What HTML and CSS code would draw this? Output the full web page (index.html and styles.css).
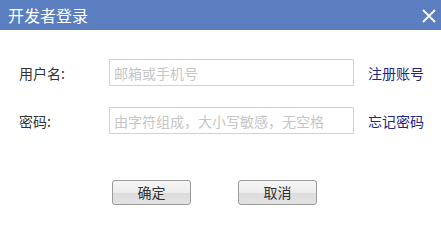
FILE: index.html
```html
<!DOCTYPE html>
<html lang="zh-CN">
<head>
<meta charset="utf-8">
<title>开发者登录</title>
<link rel="stylesheet" href="styles.css">
</head>
<body>
<div class="dialog">
  <div class="header">
    <span class="title">开发者登录</span>
    <svg class="close" width="14" height="14" viewBox="0 0 14 14" aria-label="关闭">
      <path d="M1 1 L13 13 M13 1 L1 13" stroke="#ffffff" stroke-width="1.8" fill="none"/>
    </svg>
  </div>
  <div class="form">
    <label class="label" for="user">用户名:</label>
    <input class="input" id="user" type="text" placeholder="邮箱或手机号">
    <a class="link" href="#">注册账号</a>
    <label class="label" for="pwd">密码:</label>
    <input class="input" id="pwd" type="text" placeholder="由字符组成，大小写敏感，无空格">
    <a class="link" href="#">忘记密码</a>
  </div>
  <div class="actions">
    <button class="btn" type="button">确定</button>
    <button class="btn" type="button">取消</button>
  </div>
</div>
</body>
</html>
```
FILE: styles.css
```css
html, body {
  margin: 0;
  padding: 0;
  background: #ffffff;
}
body {
  font-family: "Noto Sans CJK SC", "Noto Sans", "Liberation Sans", sans-serif;
  color: #333333;
}
.dialog {
  width: 441px;
  height: 222px;
  background: #ffffff;
}
.header {
  height: 30px;
  background: #5a7ebf;
  display: flex;
  align-items: center;
  justify-content: space-between;
  padding: 0 5px 0 8px;
}
.title {
  color: #ffffff;
  font-size: 16px;
  line-height: 30px;
}
.close {
  display: block;
  margin-top: 2px;
}
.form {
  display: grid;
  grid-template-columns: 76px 245px auto;
  column-gap: 14px;
  row-gap: 21px;
  align-items: center;
  padding: 29px 0 0 19px;
}
.label {
  font-size: 14px;
  color: #333333;
  grid-column: 1;
}
.input {
  box-sizing: border-box;
  width: 245px;
  height: 27px;
  border: 1px solid #b8dbe9;
  padding: 0 0 0 4px;
  margin: 0;
  font-family: inherit;
  font-size: 14px;
  color: #333333;
  outline: none;
}
.input::placeholder {
  color: #c6c6c6;
}
.link {
  font-size: 14px;
  color: #1c2788;
  text-decoration: none;
}
.actions {
  display: flex;
  gap: 47px;
  padding: 46px 0 0 112px;
}
.btn {
  box-sizing: border-box;
  width: 79px;
  height: 25px;
  border: 1px solid #9a9a9a;
  border-radius: 3px;
  background: linear-gradient(#f6f6f6 0%, #ececec 50%, #dcdcdc 51%, #e2e2e2 100%);
  font-family: inherit;
  font-size: 14px;
  color: #333333;
  padding: 0;
  line-height: 23px;
}
```
